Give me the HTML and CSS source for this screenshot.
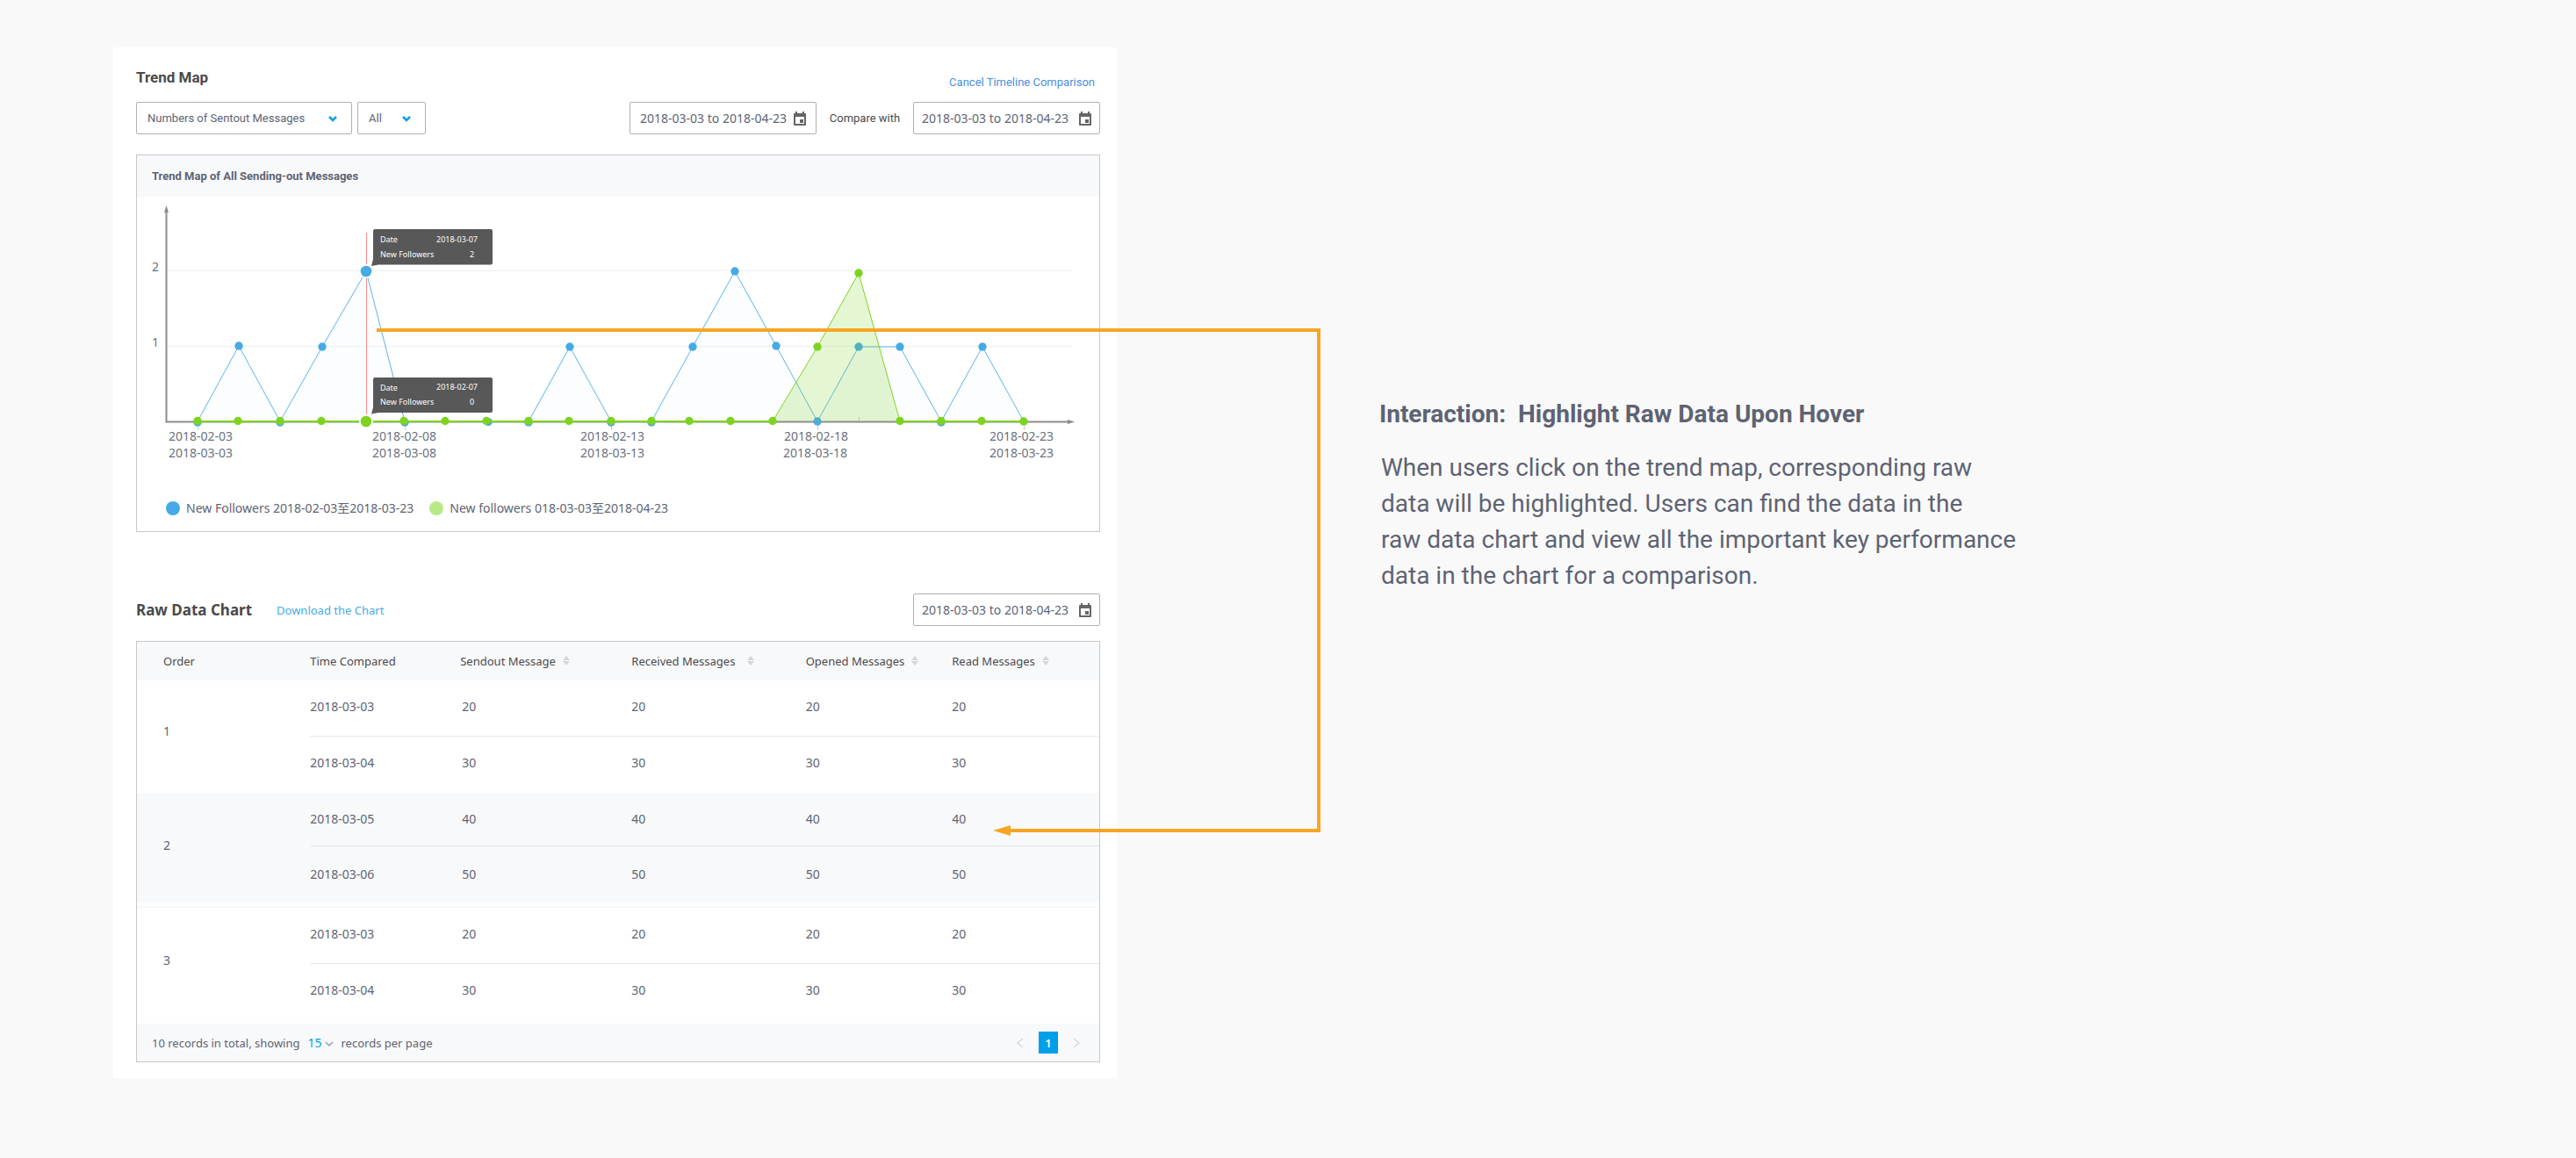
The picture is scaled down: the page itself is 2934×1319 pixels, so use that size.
FILE: index.html
```html
<!DOCTYPE html>
<html lang="en">
<head>
<meta charset="utf-8">
<title>Trend Map</title>
<link rel="stylesheet" href="styles.css">
</head>
<body>
<svg class="defs" aria-hidden="true">
  <symbol id="calendar" viewBox="0 0 14 16">
    <path fill-rule="evenodd" d="M2 0h2v2h6V0h2v2h1q1 0 1 1v12q0 1-1 1H1q-1 0-1-1V3q0-1 1-1h1zM2 6v8h10V6z"/>
    <path d="M7 9h4v4H7z"/>
  </symbol>
  <symbol id="chevron" viewBox="0 0 10 7">
    <path d="M1 1l4 4 4-4" fill="none" stroke="currentColor" stroke-width="2.500"/>
  </symbol>
  <symbol id="chevron-thin" viewBox="0 0 10 7">
    <path d="M1 1l4 4 4-4" fill="none" stroke="currentColor" stroke-width="1.500"/>
  </symbol>
  <symbol id="sort" viewBox="0 0 8 11">
    <path d="M0 5l4-5 4 5zM0 6h8l-4 5z"/>
  </symbol>
</svg>
<main class="page">
  <section class="card">
    <header class="card-head">
      <h2 class="title">Trend Map</h2>
      <a class="cancel" href="#">Cancel Timeline Comparison</a>
    </header>
    <div class="controls">
      <span class="select select-metric">
        <select aria-label="Metric"><option>Numbers of Sentout Messages</option></select>
        <svg class="chevron"><use href="#chevron"/></svg>
      </span>
      <span class="select select-scope">
        <select aria-label="Scope"><option>All</option></select>
        <svg class="chevron"><use href="#chevron"/></svg>
      </span>
      <span class="date date-first">
        <input type="text" aria-label="Period" value="2018-03-03 to 2018-04-23">
        <svg class="calendar"><use href="#calendar"/></svg>
      </span>
      <label class="compare" for="compare-period">Compare with</label>
      <span class="date">
        <input type="text" id="compare-period" value="2018-03-03 to 2018-04-23">
        <svg class="calendar"><use href="#calendar"/></svg>
      </span>
    </div>

    <section class="panel chart-panel">
      <h3 class="panel-title">Trend Map of All Sending-out Messages</h3>
      <svg class="chart" viewBox="156 224 1096 336" role="img" aria-label="New followers per day">
        <path class="grid" d="M190 308.500H1222M190 394.500H1222"/>
        <path class="tick" d="M225.500 480v10M461.500 480v10M696.500 480v10M931.500 480v10M1166.500 480v10M978.500 475v5"/>
        <path class="axis" d="M189.500 238V480.500H1220"/>
        <path class="axis-tip" d="M189.500 234l2.500 8h-5zM1224 480.500l-8 2.500v-5z"/>
        <path class="blue-area" d="M225 480L272 394L319 480L367 395L417 309L461 480ZM602 480L649 395L696 480ZM742 480L789 395L837 309L884 394L931 480L978 395H1025L1072 480L1119 395L1166 480Z"/>
        <path class="blue-line" d="M225 480L272 394L319 480L367 395L417 309L461 480M602 480L649 395L696 480M742 480L789 395L837 309L884 394L931 480L978 395H1025L1072 480L1119 395L1166 480"/>
        <path class="hover-line" d="M417.500 265V472"/>
        <g class="blue-dot">
          <circle cx="225" cy="481" r="4.700"/><circle cx="272" cy="394" r="4.700"/><circle cx="319" cy="481" r="4.700"/><circle cx="367" cy="395" r="4.700"/><circle cx="461" cy="481" r="4.700"/><circle cx="556" cy="480.500" r="4.700"/><circle cx="602" cy="481" r="4.700"/><circle cx="649" cy="395" r="4.700"/><circle cx="696" cy="481" r="4.700"/><circle cx="742" cy="481" r="4.700"/><circle cx="789" cy="395" r="4.700"/><circle cx="837" cy="309" r="4.700"/><circle cx="884" cy="394" r="4.700"/><circle cx="931" cy="480" r="4.700"/><circle cx="978" cy="395" r="4.700"/><circle cx="1025" cy="395" r="4.700"/><circle cx="1072" cy="481" r="4.700"/><circle cx="1119" cy="395" r="4.700"/>
        </g>
        <path class="green-area" d="M880 480L931 395L978 311L1025 480Z"/>
        <path class="green-line" d="M880 480L931 395L978 311L1025 480"/>
        <path class="green-base" d="M225 480H880M1025 480H1166"/>
        <g class="green-dot">
          <circle cx="225" cy="479.500" r="4.700"/><circle cx="271" cy="479.500" r="4.700"/><circle cx="319" cy="479.500" r="4.700"/><circle cx="366" cy="479.500" r="4.700"/><circle cx="460" cy="479.500" r="4.700"/><circle cx="507" cy="479.500" r="4.700"/><circle cx="554" cy="479.500" r="4.700"/><circle cx="602" cy="479.500" r="4.700"/><circle cx="648" cy="479.500" r="4.700"/><circle cx="696" cy="479.500" r="4.700"/><circle cx="742" cy="479.500" r="4.700"/><circle cx="785" cy="479.500" r="4.700"/><circle cx="832" cy="479.500" r="4.700"/><circle cx="880" cy="479.500" r="4.700"/><circle cx="931" cy="395" r="4.700"/><circle cx="978" cy="311" r="4.700"/><circle cx="1025" cy="479.500" r="4.700"/><circle cx="1072" cy="479.500" r="4.700"/><circle cx="1118" cy="479.500" r="4.700"/><circle cx="1166" cy="480" r="4.700"/>
        </g>
        <circle class="ring" cx="417" cy="309" r="8"/><circle class="blue-dot" cx="417" cy="309" r="6.300"/>
        <circle class="ring" cx="417" cy="480" r="8"/><circle class="green-dot" cx="417" cy="480" r="6.300"/>
        <path class="tip" d="M427 261H559q2 0 2 2V299.500q0 2-2 2H431L423 303L425 295V263q0-2 2-2z"/>
        <path class="tip" d="M427 430H559q2 0 2 2V468q0 2-2 2H431L423 471.500L425 464V432q0-2 2-2z"/>
        <g class="tip-text">
          <text x="433" y="276">Date</text><text x="497" y="276">2018-03-07</text>
          <text x="433" y="293">New Followers</text><text x="535" y="293">2</text>
          <text x="433" y="445">Date</text><text x="497" y="444">2018-02-07</text>
          <text x="433" y="461">New Followers</text><text x="535" y="461">0</text>
        </g>
        <g class="axis-text">
          <text x="173" y="309">2</text><text x="173" y="395">1</text>
          <text x="192" y="502">2018-02-03</text><text x="192" y="521">2018-03-03</text>
          <text x="424" y="502">2018-02-08</text><text x="424" y="521">2018-03-08</text>
          <text x="661" y="502">2018-02-13</text><text x="661" y="521">2018-03-13</text>
          <text x="893" y="502">2018-02-18</text><text x="892" y="521">2018-03-18</text>
          <text x="1127" y="502">2018-02-23</text><text x="1127" y="521">2018-03-23</text>
        </g>
      </svg>
      <ul class="legend">
        <li><span class="dot dot-blue"></span>New Followers 2018-02-03至2018-03-23</li>
        <li><span class="dot dot-green"></span>New followers 018-03-03至2018-04-23</li>
      </ul>
    </section>

    <header class="raw-head">
      <h2 class="title raw-title">Raw Data Chart</h2>
      <a class="download" href="#">Download the Chart</a>
      <span class="date">
        <input type="text" aria-label="Raw data period" value="2018-03-03 to 2018-04-23">
        <svg class="calendar"><use href="#calendar"/></svg>
      </span>
    </header>

    <section class="panel">
      <table class="data">
        <colgroup><col class="c-order"><col class="c-time"><col class="c-sent"><col class="c-received"><col class="c-opened"><col class="c-read"></colgroup>
        <thead>
          <tr>
            <th class="order">Order</th>
            <th>Time Compared</th>
            <th>Sendout Message<button class="sort" aria-label="Sort by sendout"><svg><use href="#sort"/></svg></button></th>
            <th>Received Messages<button class="sort sort-wide" aria-label="Sort by received"><svg><use href="#sort"/></svg></button></th>
            <th>Opened Messages<button class="sort" aria-label="Sort by opened"><svg><use href="#sort"/></svg></button></th>
            <th>Read Messages<button class="sort" aria-label="Sort by read"><svg><use href="#sort"/></svg></button></th>
          </tr>
        </thead>
        <tbody>
          <tr class="first"><td class="order" rowspan="2">1</td><td>2018-03-03</td><td class="sent">20</td><td>20</td><td>20</td><td>20</td></tr>
          <tr><td>2018-03-04</td><td class="sent">30</td><td>30</td><td>30</td><td>30</td></tr>
        </tbody>
        <tbody class="highlight">
          <tr class="first"><td class="order" rowspan="2">2</td><td>2018-03-05</td><td class="sent">40</td><td>40</td><td>40</td><td>40</td></tr>
          <tr class="last"><td>2018-03-06</td><td class="sent">50</td><td>50</td><td>50</td><td>50</td></tr>
        </tbody>
        <tbody class="after">
          <tr class="spacer"><td colspan="6"></td></tr>
          <tr class="first"><td class="order" rowspan="2">3</td><td>2018-03-03</td><td class="sent">20</td><td>20</td><td>20</td><td>20</td></tr>
          <tr class="last"><td>2018-03-04</td><td class="sent">30</td><td>30</td><td>30</td><td>30</td></tr>
        </tbody>
      </table>
      <footer class="foot">
        <label for="page-size">10 records in total, showing</label>
        <span class="size">
          <select id="page-size"><option>15</option></select>
          <svg class="chevron"><use href="#chevron-thin"/></svg>
        </span>
        <span>records per page</span>
        <nav class="pager" aria-label="Pages">
          <button class="step" aria-label="Previous page"><svg viewBox="0 0 8 12"><path d="M7 1L1 6l6 5"/></svg></button>
          <button class="current">1</button>
          <button class="step" aria-label="Next page"><svg viewBox="0 0 8 12"><path d="M1 1l6 5-6 5"/></svg></button>
        </nav>
      </footer>
    </section>
    <div class="connector"><svg class="arrow" viewBox="0 0 20 12"><path d="M0 6L20 0V12z"/></svg></div>
  </section>

  <section class="note">
    <h1>Interaction:&nbsp; Highlight Raw Data Upon Hover</h1>
    <p>When users click on the trend map, corresponding raw<br>data will be highlighted. Users can find the data in the<br>raw data chart and view all the important key performance<br>data in the chart for a comparison.</p>
  </section>
</main>
</body>
</html>
```
FILE: styles.css
```css
* { box-sizing: border-box; }

body {
  margin: 0;
  background: #f9f9f9;
  color: #5e6373;
  font: 14px/20px "Noto Sans", "Noto Sans CJK SC", sans-serif;
}

h1, h2, h3, p, ul { margin: 0; padding: 0; }
a { text-decoration: none; }
svg { display: block; }
button, select, input { font: inherit; color: inherit; background: none; border: 0; padding: 0; margin: 0; }
.defs { position: absolute; width: 0; height: 0; }

.page {
  display: grid;
  grid-template-columns: 1143fr 1533fr;
  align-items: start;
  padding: 54px 129px 91px;
}

.card {
  position: relative;
  background: #fff;
  padding: 22px 19px 18px 26px;
}

.card-head { display: flex; justify-content: space-between; height: 28px; }
.title { font: bold 17px/24px Roboto, sans-serif; color: #4a4a4a; }
.cancel { font: 13px/20px Roboto, sans-serif; color: #4a90e2; align-self: flex-end; padding-right: 6px; }

.controls { display: flex; align-items: center; margin: 12px 0 23px; font-family: Roboto, sans-serif; font-size: 13px; }
.select { position: relative; display: flex; height: 37px; border: 1px solid #b0b0b0; border-radius: 2px; }
.select select { appearance: none; width: 100%; padding-left: 12px; }
.select-metric { width: 246px; margin-right: 6px; }
.select-scope { width: 78px; }
.chevron { position: absolute; right: 16px; top: 15px; width: 10px; height: 7px; color: #00a0e9; pointer-events: none; }

.date { display: flex; align-items: center; width: 213px; height: 37px; padding: 0 9px; border: 1px solid #b0b0b0; border-radius: 2px; }
.date input { flex: 1; min-width: 0; font-family: "Noto Sans", sans-serif; font-size: 14px; }
.date-first { margin-left: auto; padding: 0 11px; }
.calendar { width: 14px; height: 16px; fill: #666; }
.compare { width: 110px; text-align: center; color: #4a4a4a; }

.panel { border: 1px solid #c8c8c8; }
.panel-title { font: bold 13px/47px Roboto, sans-serif; padding-left: 17px; background: #f8f9fb; }
.chart { width: 100%; height: auto; }
.grid { stroke: #efefef; }
.tick { stroke: #ccc; }
.grid, .axis, .tick { fill: none; }
.axis { stroke: #8c8c8c; stroke-width: 2; }
.axis-tip { fill: #8c8c8c; }
.blue-area { fill: #4a90e2; fill-opacity: .02; }
.blue-line { fill: none; stroke: #5cb4ec; }
.blue-dot { fill: #46aae6; }
.green-area { fill: #7ed321; fill-opacity: .2; }
.green-line { fill: none; stroke: #7ed321; }
.green-base { stroke: #7ed321; stroke-width: 2; }
.green-dot { fill: #7ed321; }
.hover-line { stroke: #ff8a8a; }
.ring { fill: #fff; }
.tip { fill: #4a4a4a; fill-opacity: .92; }
.tip-text { fill: #fff; font-size: 9px; }
.axis-text { fill: #6b7080; font-size: 14px; }

.legend { display: flex; gap: 18px; list-style: none; padding: 9px 33px 16px; }
.legend li { display: flex; align-items: center; gap: 7px; }
.dot { width: 16px; height: 16px; border-radius: 50%; }
.dot-blue { background: #46aae6; }
.dot-green { background: #b8e986; }

.raw-head { display: flex; align-items: center; margin: 70px 0 17px; }
.raw-title { font-family: "Noto Sans", sans-serif; }
.download { margin: 0 auto 0 28px; color: #46aae6; font-size: 13px; }

.data { width: 100%; border-collapse: separate; border-spacing: 0; table-layout: fixed; }
.c-order { width: 18%; }
.c-time { width: 15.6%; }
.c-sent { width: 17.8%; }
.c-received { width: 18.1%; }
.c-opened { width: 15.2%; }
.data th { height: 44px; padding: 0; text-align: left; font-size: 13px; font-weight: normal; color: #4a4a4a; background: #f8f9fb; white-space: nowrap; }
.data td { height: 64px; padding: 20px 0 0; vertical-align: top; }
.data .order { padding-left: 30px; }
.data td.order { vertical-align: middle; padding-top: 0; padding-bottom: 12px; }
.data .sent { padding-left: 2px; }
.first td:not(.order) { border-bottom: 1px solid #e6e8ea; }
.highlight { background: #f8f9fb; }
.highlight td { height: 61px; }
.highlight .last td { height: 63px; padding-top: 22px; }
.data .highlight .order { padding-bottom: 4px; }
.data .spacer td { height: 7px; padding: 0; background: #fcfdfe; border-bottom: 1px solid #f5f6f8; }
.last td { height: 68px; }
.sort { display: inline-block; margin-left: 8px; }
.sort-wide { margin-left: 14px; }
.sort svg { width: 8px; height: 11px; fill: #d4d6d8; }

.foot { display: flex; align-items: center; gap: 9px; height: 43px; padding: 0 22px 0 17px; font-size: 13px; background: #f8f9fb; }
.size { position: relative; width: 29px; color: #00a0e9; font-size: 14px; }
.size select { appearance: none; width: 100%; }
.size .chevron { right: 0; top: 8px; color: #9aa0aa; }
.pager { display: flex; align-items: center; gap: 17px; margin-left: auto; }
.pager .current { width: 22px; height: 25px; background: #00a0e9; color: #fff; font-weight: 600; }
.step svg { width: 8px; height: 12px; fill: none; stroke: #d8dadc; stroke-width: 1.5; }

/* Line from the hovered point down to its row in the table */
.connector { position: absolute; left: 300px; right: -232px; top: 320px; height: 574px; border: solid #f5a623; border-width: 4px 4px 0 0; pointer-events: none; }
.connector::after { content: ""; position: absolute; left: 720px; right: 0; bottom: 0; height: 4px; background: #f5a623; }
.arrow { position: absolute; left: 702px; bottom: -4px; width: 20px; height: 12px; fill: #f5a623; }

.note { padding: 398px 0 0 299px; white-space: nowrap; }
.note h1 { font: bold 28px/40px Roboto, sans-serif; }
.note p { font: 28px/41px Roboto, sans-serif; padding: 20px 0 0 2px; }
```
